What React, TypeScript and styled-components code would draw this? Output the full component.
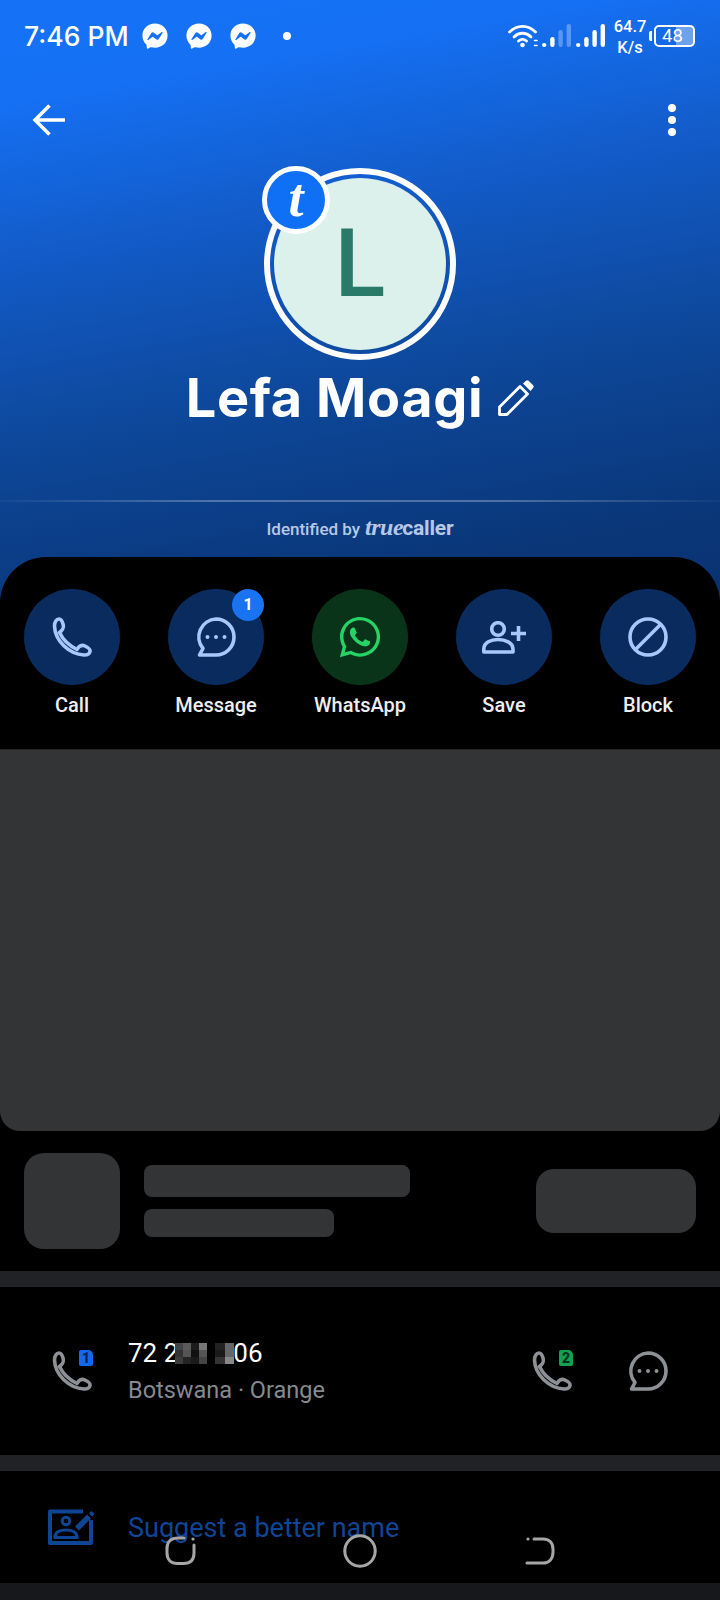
import styled, { createGlobalStyle } from "styled-components"
import { FaFacebookMessenger, FaWhatsapp } from "react-icons/fa"

const GlobalStyle = createGlobalStyle`
  html, body { margin: 0; padding: 0; background: #000; }
  * { box-sizing: border-box; }
`

const Page = styled.div`
  position: relative;
  width: 720px;
  height: 1600px;
  overflow: hidden;
  background: #000;
  font-family: Roboto, "Liberation Sans", sans-serif;
  color: #fff;
`

const Hero = styled.header`
  height: 603px;
  background: linear-gradient(170deg, #1572f7 0%, #1570f3 14%, #1259c4 38%, #0d4799 62%, #0a3678 88%, #0a3272 100%);
`

const StatusBar = styled.div`
  display: flex;
  align-items: flex-start;
  height: 96px;
  padding: 19px 25px 0 24px;
`

const Time = styled.span`
  font-family: Inter, Roboto, sans-serif;
  font-size: 26.5px;
  font-weight: 500;
  line-height: 34px;
  margin-right: 13px;
`

const Notifications = styled.div`
  display: flex;
  align-items: center;
  gap: 18px;
  height: 34px;
  color: #fff;
`

const NotifDot = styled.i`
  width: 8px;
  height: 8px;
  border-radius: 50%;
  background: #fff;
  margin-left: 9px;
`

const StatusRight = styled.div`
  display: flex;
  align-items: center;
  margin-left: auto;
  height: 34px;
`

const Speed = styled.div`
  position: relative;
  top: 1px;
  width: 40px;
  margin: 0 4px 0 5px;
  font-size: 16.5px;
  font-weight: 500;
  line-height: 21px;
  text-align: center;
`

const Battery = styled.div`
  position: relative;
  width: 41px;
  height: 22px;
  border: 2px solid #fff;
  border-radius: 5px;
  padding-right: 4px;
  font-size: 18.5px;
  line-height: 18px;
  text-align: center;
  background: linear-gradient(90deg, transparent 54%, rgba(255, 255, 255, 0.38) 54%);
  &::before {
    content: "";
    position: absolute;
    left: -7px;
    top: 4px;
    width: 3px;
    height: 10px;
    border-radius: 2px 0 0 2px;
    background: #fff;
  }
`

const Toolbar = styled.div`
  display: flex;
  align-items: center;
  justify-content: space-between;
  height: 48px;
  padding: 0 44px 0 32px;
`

const MenuDots = styled.div`
  display: flex;
  flex-direction: column;
  gap: 4px;
  i {
    width: 8px;
    height: 8px;
    border-radius: 50%;
    background: #fff;
  }
`

const Profile = styled.div`
  display: flex;
  flex-direction: column;
  align-items: center;
  margin-top: 24px;
`

const AvatarRing = styled.div`
  position: relative;
  width: 192px;
  height: 192px;
  border: 6px solid #fff;
  border-radius: 50%;
  padding: 4px;
`

const AvatarFace = styled.div`
  display: flex;
  align-items: center;
  justify-content: center;
  width: 100%;
  height: 100%;
  border-radius: 50%;
  background: #dcf0ec;
  color: #2a7a6a;
  font-size: 94px;
  font-weight: 500;
  line-height: 1;
`

const TcBadge = styled.div`
  position: absolute;
  left: -8px;
  top: -8px;
  display: flex;
  align-items: center;
  justify-content: center;
  width: 68px;
  height: 68px;
  border: 5px solid #fff;
  border-radius: 50%;
  background: #0f6ff5;
  font-family: "Liberation Serif", serif;
  font-size: 54px;
  font-style: italic;
  font-weight: 700;
  line-height: 1;
  padding-bottom: 5px;
`

const NameRow = styled.div`
  display: flex;
  align-items: center;
  gap: 15px;
  height: 70px;
  margin-top: 3px;
`

const Name = styled.h1`
  margin: 0;
  font-family: Inter, sans-serif;
  font-size: 54px;
  font-weight: 700;
  line-height: 70px;
  letter-spacing: 0.6px;
`

const HeroDivider = styled.div`
  height: 2px;
  margin-top: 67px;
  background: linear-gradient(90deg, rgba(255, 255, 255, 0.03), rgba(255, 255, 255, 0.28) 30%, rgba(255, 255, 255, 0.28) 70%, rgba(255, 255, 255, 0.03));
`

const Identified = styled.div`
  display: flex;
  align-items: baseline;
  justify-content: center;
  gap: 5px;
  margin-top: 13px;
  color: #b7c8e6;
  font-size: 17px;
  font-weight: 500;
  line-height: 24px;
`

const BrandTrue = styled.span`
  font-family: "Liberation Serif", serif;
  font-size: 24px;
  font-style: italic;
  font-weight: 700;
  letter-spacing: -0.5px;
`

const BrandCaller = styled.span`
  font-size: 21px;
  font-weight: 700;
  margin-left: -5px;
  letter-spacing: -0.2px;
`

const Sheet = styled.section`
  position: relative;
  margin-top: -46px;
  border-radius: 46px 46px 0 0;
  background: #000;
`

const Actions = styled.div`
  display: grid;
  grid-template-columns: repeat(5, 144px);
  height: 192px;
  padding-top: 32px;
`

const Action = styled.div`
  display: flex;
  flex-direction: column;
  align-items: center;
`

const ActionCircle = styled.div<{ $green?: boolean }>`
  position: relative;
  display: flex;
  align-items: center;
  justify-content: center;
  width: 96px;
  height: 96px;
  border-radius: 50%;
  background: ${(p) => (p.$green ? "#0a3419" : "#0a2b5e")};
  color: ${(p) => (p.$green ? "#25d366" : "#a8c7fa")};
`

const CountBadge = styled.span`
  position: absolute;
  top: 0;
  right: 0;
  width: 32px;
  height: 32px;
  border-radius: 50%;
  background: #1a73f0;
  color: #fff;
  font-size: 16px;
  font-weight: 700;
  line-height: 32px;
  text-align: center;
`

const ActionLabel = styled.span`
  margin-top: 8px;
  color: #eeeeee;
  font-size: 20px;
  font-weight: 500;
  line-height: 24px;
`

const AdPanel = styled.div`
  height: 382px;
  border-top: 1px solid #232426;
  border-radius: 0 0 20px 20px;
  background: #333436;
`

const SkeletonRow = styled.div`
  display: flex;
  align-items: center;
  height: 140px;
  padding: 0 24px;
`

const SkeletonThumb = styled.div`
  width: 96px;
  height: 96px;
  margin-right: 24px;
  border-radius: 20px;
  background: #333436;
`

const SkeletonLines = styled.div`
  display: flex;
  flex-direction: column;
  gap: 12px;
`

const SkeletonLine = styled.div<{ $w: number; $h: number }>`
  width: ${(p) => p.$w}px;
  height: ${(p) => p.$h}px;
  border-radius: 8px;
  background: #333436;
`

const SkeletonButton = styled.div`
  width: 160px;
  height: 64px;
  margin-left: auto;
  border-radius: 18px;
  background: #333436;
`

const Band = styled.div<{ $dark?: boolean }>`
  height: ${(p) => (p.$dark ? 17 : 16)}px;
  background: ${(p) => (p.$dark ? "#17181b" : "#212226")};
`

const PhoneRow = styled.div`
  display: flex;
  align-items: center;
  height: 168px;
  padding: 0 0 0 52px;
  color: #8d9196;
`

const SimIcon = styled.div`
  position: relative;
  width: 40px;
  height: 40px;
`

const SimTag = styled.span<{ $green?: boolean }>`
  position: absolute;
  top: -1px;
  right: -1px;
  width: 14px;
  height: 16px;
  border-radius: 2px 5px 2px 2px;
  background: ${(p) => (p.$green ? "#12a150" : "#1368f0")};
  color: ${(p) => (p.$green ? "#07301a" : "#06224f")};
  font-size: 14px;
  font-weight: 900;
  line-height: 16px;
  text-align: center;
`

const PhoneInfo = styled.div`
  margin-left: 36px;
  margin-top: -1px;
`

const PhoneNumber = styled.div`
  display: flex;
  align-items: center;
  color: #fff;
  font-size: 26px;
  line-height: 34px;
`

const Mosaic = styled.span<{ $cols: number }>`
  display: inline-grid;
  grid-template-columns: repeat(${(p) => p.$cols}, 8px);
  grid-auto-rows: 7px;
  margin-right: 8px;
  &:first-of-type {
    margin-left: -3px;
  }
  &:last-of-type {
    grid-template-columns: repeat(${(p) => p.$cols}, 9.5px);
    margin-right: -1px;
  }
`

const PhoneCarrier = styled.div`
  margin-top: 5px;
  color: #868a8f;
  font-size: 23.5px;
  line-height: 30px;
`

const PhoneActions = styled.div`
  display: flex;
  align-items: center;
  gap: 56px;
  margin-left: auto;
  margin-right: 52px;
`

const SuggestRow = styled.div`
  display: flex;
  align-items: center;
  height: 112px;
  padding-left: 48px;
  color: #0f4595;
`

const SuggestText = styled.span`
  position: relative;
  top: 1px;
  margin-left: 33px;
  font-size: 27px;
  line-height: 34px;
`

const NavBar = styled.nav`
  position: absolute;
  left: 0;
  right: 0;
  bottom: 32px;
  display: grid;
  grid-template-columns: repeat(3, 1fr);
  justify-items: center;
  align-items: center;
  color: #a6a6a6;
`

const NavSlot = styled.div<{ $shift: number }>`
  display: flex;
  transform: translateX(${(p) => p.$shift}px);
`

const mosaicA = ["#444", "#5a5a5a", "#1c1c1c", "#777", "#333", "#555", "#111", "#555", "#3c3c3c", "#242424", "#1a1a1a", "#444"]
const mosaicB = ["#222", "#666", "#1a1a1a", "#666", "#333", "#888"]

function PhoneGlyph({ size = 40 }: { size?: number }) {
  return (
    <svg width={size} height={size} viewBox="0 0 40 40" fill="none" stroke="currentColor" strokeWidth="3.600" strokeLinejoin="round">
      <path d="M2.500 9C2.500 5 4.500 2 7 2c1.500 0 3 1.500 4 5 1 3.500.5 5.500-3.500 8.500 3.500 7.500 10.500 13.500 17.500 17 2-4 5-5 8-3.500 4 2 5.500 3.500 5 5.500-.5 2.500-3 3.500-6 3.500C17 37 3 24 2.500 9Z" />
    </svg>
  )
}

function BubbleGlyph() {
  return (
    <svg width="40" height="40" viewBox="0 0 40 40" fill="none" stroke="currentColor" strokeWidth="3.600" strokeLinejoin="round">
      <path d="M20 2a18 18 0 1 1 0 36H3.500L7 31.500A18 18 0 0 1 20 2Z" />
      <g fill="currentColor" stroke="none">
        <circle cx="11.500" cy="20" r="2" />
        <circle cx="20" cy="20" r="2" />
        <circle cx="28.500" cy="20" r="2" />
      </g>
    </svg>
  )
}

function SaveGlyph() {
  return (
    <svg width="44" height="33" viewBox="0 0 44 33" fill="none" stroke="currentColor" strokeWidth="3.600">
      <circle cx="16" cy="8" r="6.300" />
      <path d="M1.800 31H31v-3c0-6.500-8-9.500-15-9.500S1.800 21.500 1.800 28Z" strokeLinejoin="round" />
      <path d="M36.500 5v15M29 12.500h15" />
    </svg>
  )
}

function BlockGlyph() {
  return (
    <svg width="40" height="40" viewBox="0 0 40 40" fill="none" stroke="currentColor" strokeWidth="3.600">
      <circle cx="20" cy="20" r="18" />
      <path d="M7 33 33 7" />
    </svg>
  )
}

function PencilGlyph() {
  return (
    <svg width="36" height="36" viewBox="0 0 36 36" fill="none" stroke="#fff" strokeWidth="2.800" strokeLinejoin="round">
      <path d="M1.500 34.500v-7.500L22 6.500 29.500 14 9 34.500Z" />
      <path d="M25 3.500 28 .8a2 2 0 0 1 2.600 0l4.500 4.500a2 2 0 0 1 0 2.600L32.500 11Z" fill="#fff" stroke="none" />
    </svg>
  )
}

function WifiGlyph() {
  return (
    <svg width="30" height="24" viewBox="0 0 30 24" fill="none" stroke="#fff" strokeWidth="2.800" strokeLinecap="round">
      <path d="M1.500 8C9 .5 20 .5 27.500 8" />
      <path d="M6 13c5-5 12-5 17 0" />
      <path d="M10.500 17c3-2.500 5-2.500 8 0" />
      <circle cx="14.500" cy="21" r="2.300" fill="#fff" stroke="none" />
      <path d="M26.500 16.500h2.500M26.500 21.500h2.500" strokeWidth="1.600" />
    </svg>
  )
}

function SignalGlyph({ dim, gap }: { dim: number; gap: number }) {
  const heights = [4, 10, 17, 23]
  return (
    <svg width="29" height="24" viewBox="0 0 29 24" style={{ marginLeft: gap }}>
      {heights.map((h, i) => (
        <rect key={h} x={i * 8.200} y={23 - h} width="4.400" height={h} rx="2.200" fill="#fff" opacity={i >= dim ? 0.3 : 1} />
      ))}
    </svg>
  )
}

function SuggestGlyph() {
  return (
    <svg width="47" height="36" viewBox="0 0 47 36" fill="none" stroke="currentColor" strokeWidth="4">
      <path d="M35 2.500H2v31.500h41V11" strokeLinejoin="round" />
      <circle cx="18" cy="12" r="3.800" strokeWidth="3" />
      <path d="M7 28.500c0-5 4.500-7.500 11-7.500s11 2.500 11 7.500Z" strokeWidth="3.200" strokeLinejoin="round" />
      <path d="M29 19.500 41 7.500" strokeWidth="5.500" />
      <path d="M42.500 6 45 3.500" strokeWidth="4.500" />
    </svg>
  )
}

export default function App() {
  return (
    <Page>
      <GlobalStyle />
      <Hero>
        <StatusBar>
          <Time>7:46 PM</Time>
          <Notifications>
            <FaFacebookMessenger size={26} />
            <FaFacebookMessenger size={26} />
            <FaFacebookMessenger size={26} />
            <NotifDot />
          </Notifications>
          <StatusRight>
            <WifiGlyph />
            <SignalGlyph dim={2} gap={4} />
            <SignalGlyph dim={4} gap={5} />
            <Speed>
              64.7
              <br />
              K/s
            </Speed>
            <Battery>48</Battery>
          </StatusRight>
        </StatusBar>
        <Toolbar>
          <svg width="34" height="32" viewBox="0 0 34 32" fill="none" stroke="#fff" strokeWidth="3.500">
            <path d="M33 16H3M17.500 1.500 3 16l14.500 14.500" />
          </svg>
          <MenuDots>
            <i />
            <i />
            <i />
          </MenuDots>
        </Toolbar>
        <Profile>
          <AvatarRing>
            <AvatarFace>L</AvatarFace>
            <TcBadge>t</TcBadge>
          </AvatarRing>
          <NameRow>
            <Name>Lefa Moagi</Name>
            <PencilGlyph />
          </NameRow>
        </Profile>
        <HeroDivider />
        <Identified>
          Identified by
          <span>
            <BrandTrue>true</BrandTrue> <BrandCaller>caller</BrandCaller>
          </span>
        </Identified>
      </Hero>
      <Sheet>
        <Actions>
          <Action>
            <ActionCircle>
              <PhoneGlyph />
            </ActionCircle>
            <ActionLabel>Call</ActionLabel>
          </Action>
          <Action>
            <ActionCircle>
              <BubbleGlyph />
              <CountBadge>1</CountBadge>
            </ActionCircle>
            <ActionLabel>Message</ActionLabel>
          </Action>
          <Action>
            <ActionCircle $green>
              <FaWhatsapp size={46} />
            </ActionCircle>
            <ActionLabel>WhatsApp</ActionLabel>
          </Action>
          <Action>
            <ActionCircle>
              <SaveGlyph />
            </ActionCircle>
            <ActionLabel>Save</ActionLabel>
          </Action>
          <Action>
            <ActionCircle>
              <BlockGlyph />
            </ActionCircle>
            <ActionLabel>Block</ActionLabel>
          </Action>
        </Actions>
        <AdPanel />
        <SkeletonRow>
          <SkeletonThumb />
          <SkeletonLines>
            <SkeletonLine $w={266} $h={32} />
            <SkeletonLine $w={190} $h={28} />
          </SkeletonLines>
          <SkeletonButton />
        </SkeletonRow>
        <Band />
        <PhoneRow>
          <SimIcon>
            <PhoneGlyph />
            <SimTag>1</SimTag>
          </SimIcon>
          <PhoneInfo>
            <PhoneNumber>
              72 2
              <Mosaic $cols={4}>
                {mosaicA.map((c, i) => (
                  <i key={i} style={{ background: c }} />
                ))}
              </Mosaic>
              <Mosaic $cols={2}>
                {mosaicB.map((c, i) => (
                  <i key={i} style={{ background: c }} />
                ))}
              </Mosaic>
              06
            </PhoneNumber>
            <PhoneCarrier>Botswana · Orange</PhoneCarrier>
          </PhoneInfo>
          <PhoneActions>
            <SimIcon>
              <PhoneGlyph />
              <SimTag $green>2</SimTag>
            </SimIcon>
            <BubbleGlyph />
          </PhoneActions>
        </PhoneRow>
        <Band />
        <SuggestRow>
          <SuggestGlyph />
          <SuggestText>Suggest a better name</SuggestText>
        </SuggestRow>
        <Band $dark />
      </Sheet>
      <NavBar>
        <NavSlot $shift={61}>
          <svg width="32" height="30" viewBox="0 0 32 30" fill="none" stroke="currentColor" strokeWidth="3" strokeLinecap="round">
            <path d="M19 2h-6C6 2 2 6 2 12v5c0 6.500 4 10.500 10.500 10.500h6C25 27.500 29 24 29 17V9" />
            <circle cx="28" cy="3" r="1.600" fill="currentColor" stroke="none" />
          </svg>
        </NavSlot>
        <NavSlot $shift={0}>
          <svg width="34" height="34" viewBox="0 0 34 34" fill="none" stroke="currentColor" strokeWidth="3">
            <circle cx="17" cy="17" r="15.200" />
          </svg>
        </NavSlot>
        <NavSlot $shift={-60}>
          <svg width="30" height="30" viewBox="0 0 30 30" fill="none" stroke="currentColor" strokeWidth="3" strokeLinecap="round">
            <path d="M9 3h9c6 0 10 3.500 10 10v3c0 7-4 11-10 11H2" />
            <circle cx="3" cy="3" r="1.600" fill="currentColor" stroke="none" />
          </svg>
        </NavSlot>
      </NavBar>
    </Page>
  )
}
